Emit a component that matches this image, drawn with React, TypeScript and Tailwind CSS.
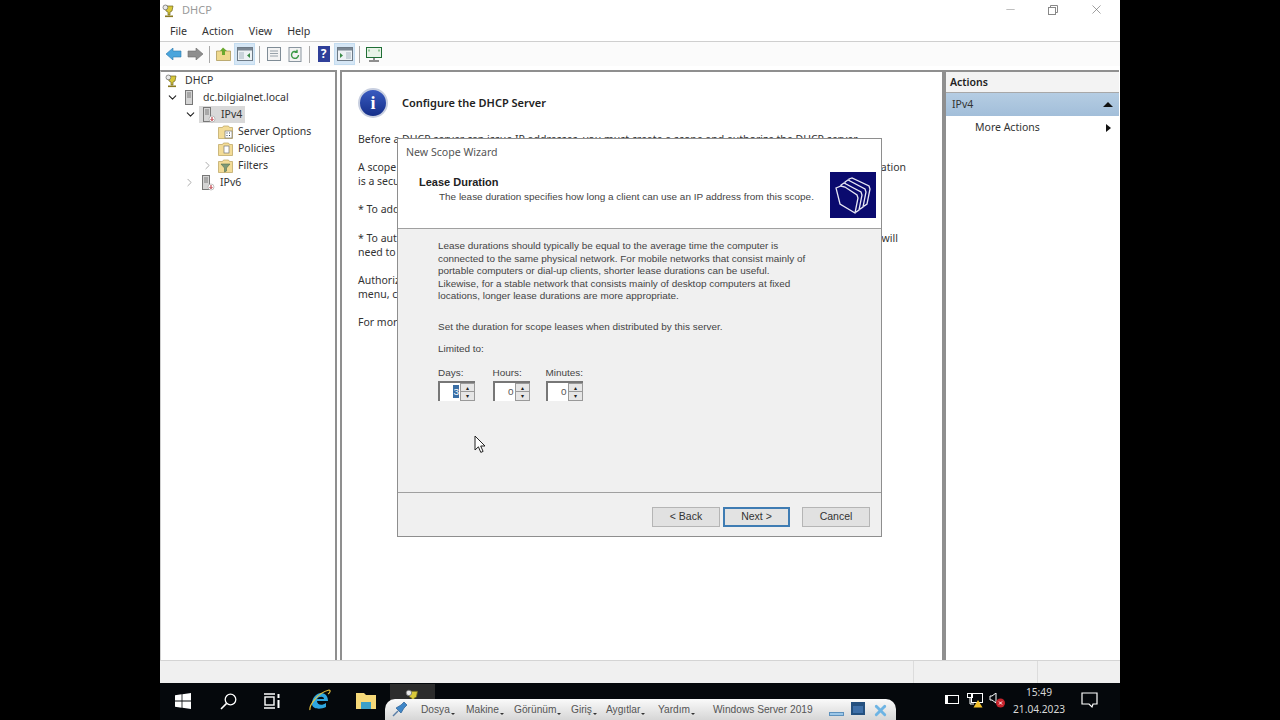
import { ChevronDown, ChevronRight, X, Minus } from "lucide-react"

const ui = "font-['Noto_Sans',sans-serif]"
const dlg = "font-['Liberation_Sans',sans-serif]"

function DhcpIcon({ size = 14 }: { size?: number }) {
  return (
    <svg width={size} height={size} viewBox="0 0 14 14">
      <path d="M3 2h8l-1 5-2 1v3H6V8L4 7z" fill="#d8c83a" stroke="#6d6420" strokeWidth="0.7" />
      <rect x="3" y="11.5" width="8" height="1.6" fill="#8a7b22" />
      <circle cx="3.4" cy="3.4" r="2.4" fill="#e9e9e9" stroke="#666" strokeWidth="0.7" />
    </svg>
  )
}

function ServerIcon({ badge = false }: { badge?: boolean }) {
  return (
    <svg width="15" height="16" viewBox="0 0 15 16">
      <rect x="2.5" y="0.5" width="7" height="14" fill="#d4d4d4" stroke="#777" />
      <path d="M4 3h4M4 5h4M4 7h4" stroke="#666" strokeWidth="0.8" />
      {badge && <circle cx="11" cy="12" r="3" fill="#fff" stroke="#999" strokeWidth="0.6" />}
      {badge && <path d="M11 10v3.4M9.6 12.2l1.4 1.4 1.4-1.4" stroke="#b3202a" strokeWidth="1" fill="none" />}
    </svg>
  )
}

function FolderIcon({ kind }: { kind: "options" | "policies" | "filters" }) {
  return (
    <svg width="15" height="14" viewBox="0 0 15 14">
      <path d="M0.5 2.5h4l1-1.5h5l1 1.5h3v11h-14z" fill="#f3dc97" stroke="#b9a05c" strokeWidth="0.7" />
      {kind === "options" && <rect x="7" y="6" width="7" height="7" fill="#fff" stroke="#777" strokeWidth="0.7" />}
      {kind === "options" && <path d="M8.5 8h1M11 8h1M8.5 10.5h1M11 10.5h1" stroke="#345" strokeWidth="1" />}
      {kind === "policies" && <rect x="6" y="4" width="5" height="7" fill="#fff" stroke="#777" strokeWidth="0.7" />}
      {kind === "filters" && <path d="M3 5h9L8.5 9v3l-2 1V9z" fill="#7d9a78" stroke="#56704f" strokeWidth="0.6" />}
    </svg>
  )
}

function ToolButton({ active = false, children }: { active?: boolean; children: React.ReactNode }) {
  return (
    <div className={`w-[21px] h-[22px] flex items-center justify-center ${active ? "bg-[#d5e6f5] border border-[#c3dcf0]" : ""}`}>
      {children}
    </div>
  )
}

function PaneIcon({ side }: { side: "left" | "right" }) {
  return (
    <svg width="16" height="14" viewBox="0 0 16 14">
      <rect x="0.5" y="0.5" width="15" height="13" fill="#eef2f5" stroke="#6d7a86" />
      <rect x="1" y="1" width="14" height="2.5" fill="#7b8793" />
      <rect x={side === "left" ? 2 : 9} y="5" width="5" height="7" fill="#c9d3da" />
      <path d={side === "left" ? "M13 6v5l-3-2.5z" : "M3 6v5l3-2.5z"} fill="#3a8a46" />
    </svg>
  )
}

function Separator() {
  return <div className="w-px h-[17px] bg-[#a8a8a8] mx-[3.5px]" />
}

function TreeRow({ indent, chevron, icon, label, selected = false }: { indent: string; chevron?: "down" | "right"; icon: React.ReactNode; label: string; selected?: boolean }) {
  return (
    <div className={`flex items-center h-[17px] ${indent}`}>
      <div className="w-[18px] flex justify-center shrink-0">
        {chevron === "down" && <ChevronDown size={13} strokeWidth={2} className="text-[#222]" />}
        {chevron === "right" && <ChevronRight size={13} strokeWidth={1.5} className="text-[#999]" />}
      </div>
      <div className={`flex items-center h-[17px] pl-[2px] pr-[3px] gap-[5px] ${selected ? "bg-[#d9d9d9]" : ""}`}>
        {icon}
        <span className="text-[#333]">{label}</span>
      </div>
    </div>
  )
}

function Spinner({ value, selected = false }: { value: string; selected?: boolean }) {
  return (
    <div className="w-[37px] h-[20px] flex bg-white border-l-2 border-t-2 border-[#777]">
      <div className="flex-1 flex justify-end items-center pr-[1px]">
        <span className={selected ? "bg-[#3a6ea5] text-white leading-[13px]" : "text-[#555]"}>{value}</span>
      </div>
      <div className="w-[15px] flex flex-col border border-[#999] bg-[#999] gap-px">
        <div className="flex-1 bg-[#e6e6e6] flex items-center justify-center text-[6px] leading-none text-[#222]">▴</div>
        <div className="flex-1 bg-[#e6e6e6] flex items-center justify-center text-[6px] leading-none text-[#222]">▾</div>
      </div>
    </div>
  )
}

function WizardButton({ label, primary = false }: { label: string; primary?: boolean }) {
  return (
    <button className={`h-[20px] text-[10.5px] text-[#333] ${primary ? "w-[67px] bg-[#e3e3e3] border-2 border-[#3f7cb3]" : "w-[68px] bg-[#e1e1e1] border border-[#b5b5b5]"}`}>
      {label}
    </button>
  )
}

function Wizard() {
  return (
    <div className={`absolute left-[237px] top-[138px] w-[485px] h-[399px] border border-[#8e8e8e] bg-[#f0f0f0] flex flex-col ${dlg} text-[9.95px] text-[#444]`}>
      <div className="h-[90px] bg-white border-b border-[#a0a0a0] relative shrink-0">
        <div className={`absolute left-[8px] top-[6px] text-[10.6px] text-[#555] ${ui}`}>New Scope Wizard</div>
        <div className="absolute left-[21px] top-[37px] text-[11px] leading-[13px] font-bold text-[#222]">Lease Duration</div>
        <div className="absolute left-[41px] top-[51px] text-[#444]">The lease duration specifies how long a client can use an IP address from this scope.</div>
        <div className="absolute left-[432px] top-[33px] w-[46px] h-[46px] bg-[#0a0a6e] flex items-center justify-center">
          <svg width="42" height="42" viewBox="0 0 42 42" fill="#0a0a6e" stroke="#e8e8f4" strokeWidth="1.3">
            <path d="M17 5l3-1 17 8 1 3-3 15-3 2-15-20z" />
            <path d="M13 8l3-2 17 9 1 3-3 15-3 2-15-23z" />
            <path d="M9 11l3-2 17 9 1 3-3 15-3 2-15-23z" />
            <path d="M4 14l5-2 4 1 12 8 1 3-3 15L8 30z" />
          </svg>
        </div>
      </div>
      <div className="flex-1 flex flex-col pl-[40px] pt-[11px]">
        <p className="leading-[12.6px] w-[380px] whitespace-nowrap">
          Lease durations should typically be equal to the average time the computer is<br />
          connected to the same physical network. For mobile networks that consist mainly of<br />
          portable computers or dial-up clients, shorter lease durations can be useful.<br />
          Likewise, for a stable network that consists mainly of desktop computers at fixed<br />
          locations, longer lease durations are more appropriate.
        </p>
        <p className="mt-[17px] leading-[13px]">Set the duration for scope leases when distributed by this server.</p>
        <p className="mt-[9px] leading-[13px]">Limited to:</p>
        <div className="flex mt-[11px]">
          <div className="w-[54.5px] flex flex-col gap-[2px]"><span className="leading-[13px]">Days:</span><Spinner value="3" selected /></div>
          <div className="w-[53px] flex flex-col gap-[2px]"><span className="leading-[13px]">Hours:</span><Spinner value="0" /></div>
          <div className="flex flex-col gap-[2px]"><span className="leading-[13px]">Minutes:</span><Spinner value="0" /></div>
        </div>
      </div>
      <div className="h-[44px] border-t border-[#a0a0a0] flex items-start justify-end gap-[3px] pr-[11px] pt-[14px] shrink-0">
        <WizardButton label="< Back" />
        <WizardButton label="Next >" primary />
        <div className="w-[6px]" />
        <WizardButton label="Cancel" />
      </div>
    </div>
  )
}

function Cursor() {
  return (
    <svg className="absolute left-[314px] top-[435px]" width="12" height="19" viewBox="0 0 12 19">
      <path d="M1 1v14l3.4-3.2 2.4 5.6 2.3-1-2.4-5.4H11z" fill="#fff" stroke="#222" strokeWidth="1" />
    </svg>
  )
}

function VmMenu({ label, left }: { label: string; left: string }) {
  return (
    <span className={`absolute ${left} flex items-end`}>
      {label}
      <span className="w-0 h-0 mb-[2px] ml-px border-l-[2px] border-r-[2px] border-t-[2px] border-l-transparent border-r-transparent border-t-[#333]" />
    </span>
  )
}

function Taskbar() {
  return (
    <div className="h-[37px] bg-[#05080c] flex items-center relative shrink-0">
      <div className="absolute left-[15px] top-[10px]">
        <svg width="16" height="16" viewBox="0 0 16 16" fill="#fff">
          <path d="M0 2.3l6.6-1v6.3H0zM7.4 1.2L16 0v7.6H7.4zM0 8.4h6.6v6.3l-6.6-1zM7.4 8.4H16V16l-8.6-1.2z" />
        </svg>
      </div>
      <svg className="absolute left-[60px] top-[10px]" width="17" height="17" viewBox="0 0 17 17" fill="none" stroke="#fff" strokeWidth="1.3">
        <circle cx="10.5" cy="6.5" r="5.3" />
        <path d="M6.6 10.4L1 16" strokeWidth="1.6" />
      </svg>
      <svg className="absolute left-[104px] top-[10px]" width="17" height="16" viewBox="0 0 17 16" fill="none" stroke="#fff" strokeWidth="1.4">
        <path d="M0 1h11M0 15h11" />
        <rect x="1" y="4" width="9" height="8" />
        <path d="M14.5 1v4M14.5 7v8" strokeWidth="2" />
      </svg>
      <svg className="absolute left-[149px] top-[6px]" width="22" height="23" viewBox="0 0 22 23">
        <path d="M3 15c0-7 5-11 9-11 5 0 7 4 7 8H8c0 4 5 5 9 2v4c-6 3-14 2-14-3zM8 10h7c0-3-5-3-7 0z" fill="#2ea6e0" />
        <path d="M1 21C0 17 8 4 20 1c2 0 1 3-1 4" fill="none" stroke="#e6c13d" strokeWidth="1.2" />
      </svg>
      <svg className="absolute left-[196px] top-[9px]" width="20" height="17" viewBox="0 0 20 17">
        <path d="M0 1h8l2 2h10v14H0z" fill="#f5d878" />
        <rect x="5" y="10" width="10" height="7" fill="#3aa0c9" />
      </svg>
      <div className="absolute left-[230px] top-[1px] w-[45px] h-[36px] bg-[#2c2c2c] flex justify-center pt-[5px]">
        <DhcpIcon size={16} />
      </div>
      <div className={`absolute left-[225px] top-[16px] w-[511px] h-[21px] rounded-t-[10px] bg-gradient-to-b from-[#fafafa] to-[#d6d6d6] flex items-center ${dlg} text-[10.2px] text-[#555]`}>
        <svg className="absolute left-[7px] top-[1px]" width="17" height="17" viewBox="0 0 17 17">
          <path d="M1 16l5-5" stroke="#5a7ea6" strokeWidth="1.4" />
          <path d="M4 8l5-3 3-3 3 3-3 3-3 5z" fill="#3f86c7" stroke="#2a5f94" strokeWidth="0.7" />
        </svg>
        <VmMenu label="Dosya" left="left-[36px]" />
        <VmMenu label="Makine" left="left-[81px]" />
        <VmMenu label="Görünüm" left="left-[129px]" />
        <VmMenu label="Giriş" left="left-[186px]" />
        <VmMenu label="Aygıtlar" left="left-[221px]" />
        <VmMenu label="Yardım" left="left-[273px]" />
        <span className="absolute left-[328px]">Windows Server 2019</span>
        <div className="absolute left-[444px] top-[13px] w-[15px] h-[4px] bg-[#9cc7e8] border border-[#5d91bd]" />
        <div className="absolute left-[466px] top-[3px] w-[14px] h-[13px] bg-[#3e6fa8] border-2 border-[#24507f] border-t-[4px]" />
        <X size={17} strokeWidth={4} className="absolute left-[487px] top-[3px] text-[#6db4e4]" />
      </div>
      <div className="absolute left-[785px] top-[12px] w-[14px] h-[9px] border border-white">
        <div className="w-[2px] h-full bg-white" />
      </div>
      <svg className="absolute left-[807px] top-[10px]" width="16" height="15" viewBox="0 0 16 15" fill="none" stroke="#fff" strokeWidth="1">
        <rect x="4.5" y="0.5" width="11" height="9" />
        <rect x="0.5" y="0.5" width="5" height="4" />
        <path d="M3 5v6h4" />
        <path d="M11 7l4.5 7.5h-9z" fill="#f2c12e" stroke="none" />
      </svg>
      <svg className="absolute left-[829px] top-[10px]" width="17" height="16" viewBox="0 0 17 16">
        <path d="M1 3h2l4-3v10l-4-3H1z" fill="none" stroke="#fff" />
        <circle cx="11.5" cy="10" r="4.5" fill="#c8232c" />
        <path d="M10 8.5l3 3M13 8.5l-3 3" stroke="#fff" />
      </svg>
      <div className={`absolute left-[853px] top-[1px] w-[52px] text-center ${ui} text-[10.2px] leading-[17px] text-[#d8d8d8] whitespace-nowrap`}>
        <div>15:49</div>
        <div>21.04.2023</div>
      </div>
      <svg className="absolute left-[921px] top-[9px]" width="17" height="17" viewBox="0 0 17 17" fill="none" stroke="#fff" strokeWidth="1.2">
        <path d="M1 1h15v11h-4l-1 3-3-3H1z" />
      </svg>
    </div>
  )
}

export default function App() {
  return (
    <div className={`w-[1280px] h-[720px] bg-black flex justify-center overflow-hidden ${ui}`}>
      <div className="w-[960px] h-full bg-white flex flex-col relative">
        <div className="h-[21px] flex items-center pl-[2px] shrink-0 relative">
          <DhcpIcon />
          <span className="ml-[6px] text-[11px] text-[#9a9a9a]">DHCP</span>
          <Minus size={13} strokeWidth={1} className="absolute left-[844px] top-[3px] text-[#888]" />
          <svg className="absolute left-[888px] top-[5px]" width="10" height="10" viewBox="0 0 10 10" fill="none" stroke="#888">
            <rect x="0.5" y="2.5" width="7" height="7" />
            <path d="M2.5 2V0.5h7v7H8" />
          </svg>
          <X size={15} strokeWidth={1} className="absolute left-[929px] top-[2px] text-[#666]" />
        </div>
        <div className="h-[21px] flex items-center gap-[15px] pl-[10px] text-[10.7px] text-[#333] border-b border-[#cfcfcf] shrink-0">
          <span>File</span>
          <span>Action</span>
          <span>View</span>
          <span>Help</span>
        </div>
        <div className="h-[24px] flex items-center pl-[3px] bg-[#fbfbfb] shrink-0">
          <ToolButton>
            <svg width="16" height="12" viewBox="0 0 16 12"><path d="M7 0v3h8v6H7v3L0 6z" fill="#4aa5dc" stroke="#2b78ad" strokeWidth="0.6" /></svg>
          </ToolButton>
          <ToolButton>
            <svg width="16" height="12" viewBox="0 0 16 12"><path d="M9 0v3H1v6h8v3l7-6z" fill="#8e8e8e" stroke="#6c6c6c" strokeWidth="0.6" /></svg>
          </ToolButton>
          <Separator />
          <ToolButton>
            <svg width="15" height="14" viewBox="0 0 15 14"><path d="M0.5 4h14v9.5H0.5z" fill="#efd98e" stroke="#a38f4e" strokeWidth="0.7" /><path d="M6 8V4H4l3-3.5L11 4H9v4z" fill="#6aa82e" /></svg>
          </ToolButton>
          <ToolButton active><PaneIcon side="left" /></ToolButton>
          <Separator />
          <ToolButton>
            <svg width="14" height="14" viewBox="0 0 14 14" fill="#f3f3f3" stroke="#7f8c96"><rect x="0.5" y="0.5" width="13" height="13" /><path d="M3 4h8M3 6.5h8M3 9h8" strokeWidth="0.8" /></svg>
          </ToolButton>
          <ToolButton>
            <svg width="14" height="15" viewBox="0 0 14 15"><rect x="1" y="0.5" width="12" height="14" fill="#f3f3f3" stroke="#8a96a0" /><path d="M10.5 8A3.5 3.5 0 1 1 9 5M9 2.8V5.4H6.6" fill="none" stroke="#3d9a47" strokeWidth="1.4" /></svg>
          </ToolButton>
          <Separator />
          <ToolButton>
            <div className="w-[12px] h-[16px] bg-[#2f3f99] text-white text-[12px] font-bold leading-[16px] text-center">?</div>
          </ToolButton>
          <ToolButton active><PaneIcon side="right" /></ToolButton>
          <Separator />
          <ToolButton>
            <svg width="16" height="15" viewBox="0 0 16 15" fill="none"><rect x="0.5" y="0.5" width="15" height="10" fill="#e8f3e8" stroke="#1f6e35" /><path d="M8 11v2M3 14h10" stroke="#222" /><path d="M3 2.5v2M13 2.5v2" stroke="#3d9a47" /></svg>
          </ToolButton>
        </div>
        <div className="h-[4px] shrink-0" />
        <div className="flex-1 flex min-h-0 text-[10.5px]">
          <div className="w-[177px] border-r-2 border-t-2 border-[#8f8f8f] border-l border-l-[#d0d0d0] shrink-0">
            <div className="flex items-center h-[17px] pl-[4px] gap-[6px] text-[#333]"><DhcpIcon /><span>DHCP</span></div>
            <TreeRow indent="pl-[2px]" chevron="down" icon={<ServerIcon />} label="dc.bilgialnet.local" />
            <TreeRow indent="pl-[20px]" chevron="down" icon={<ServerIcon badge />} label="IPv4" selected />
            <TreeRow indent="pl-[37px]" icon={<FolderIcon kind="options" />} label="Server Options" />
            <TreeRow indent="pl-[37px]" icon={<FolderIcon kind="policies" />} label="Policies" />
            <TreeRow indent="pl-[37px]" chevron="right" icon={<FolderIcon kind="filters" />} label="Filters" />
            <TreeRow indent="pl-[19px]" chevron="right" icon={<ServerIcon badge />} label="IPv6" />
          </div>
          <div className="w-[3px] shrink-0" />
          <div className="w-[604px] border-2 border-b-0 border-[#8f8f8f] shrink-0 pl-[16px] pt-[15px] text-[#333] whitespace-nowrap overflow-hidden">
            <div className="flex items-center gap-[14px] h-[32px]">
              <div className="w-[30px] h-[30px] rounded-full bg-gradient-to-b from-[#3a5bc0] to-[#152f8a] border-2 border-[#c8cfe0] flex items-center justify-center">
                <span className="text-white font-bold text-[18px] font-['Liberation_Serif',serif]">i</span>
              </div>
              <span className="font-semibold text-[11px] text-[#222]">Configure the DHCP Server</span>
            </div>
            <p className="mt-[13px] leading-[14px]">Before a DHCP server can issue IP addresses, you must create a scope and authorize the DHCP server.</p>
            <p className="mt-[14px] leading-[14px] w-[548px] flex justify-between"><span>A scope</span><span>ation</span></p>
            <p className="leading-[14px]">is a secu</p>
            <p className="mt-[14px] leading-[14px]">* To add</p>
            <p className="mt-[15px] leading-[14px] w-[540px] flex justify-between"><span>* To aut</span><span>will</span></p>
            <p className="leading-[14px]">need to</p>
            <p className="mt-[14px] leading-[14px]">Authoriz</p>
            <p className="leading-[14px]">menu, c</p>
            <p className="mt-[14px] leading-[14px]">For mor</p>
          </div>
          <div className="w-[175px] border-l-2 border-t-2 border-[#8f8f8f] shrink-0 flex flex-col">
            <div className="h-[21px] flex items-center pl-[4px] pt-[1px] bg-[#f3f3f3] border-b border-[#a8a8a8] font-semibold text-[#222]">Actions</div>
            <div className="h-[23px] flex items-center justify-between pl-[6px] pr-[6px] bg-gradient-to-b from-[#b5cde3] to-[#a2bed9] text-[#333]">
              <span>IPv4</span>
              <div className="w-0 h-0 border-l-[5px] border-r-[5px] border-b-[5px] border-l-transparent border-r-transparent border-b-[#111]" />
            </div>
            <div className="h-[24px] flex items-center justify-between pl-[29px] pr-[8px] text-[#333]">
              <span>More Actions</span>
              <div className="w-0 h-0 border-t-[4px] border-b-[4px] border-l-[5px] border-t-transparent border-b-transparent border-l-[#111]" />
            </div>
          </div>
        </div>
        <div className="h-[23px] bg-[#f0f0f0] border-t border-[#d4d4d4] shrink-0 flex">
          <div className="w-[753px]" />
          <div className="w-[124px] border-l border-[#dcdcdc]" />
          <div className="flex-1 border-l border-[#dcdcdc]" />
        </div>
        <Taskbar />
        <Wizard />
        <Cursor />
      </div>
    </div>
  )
}
